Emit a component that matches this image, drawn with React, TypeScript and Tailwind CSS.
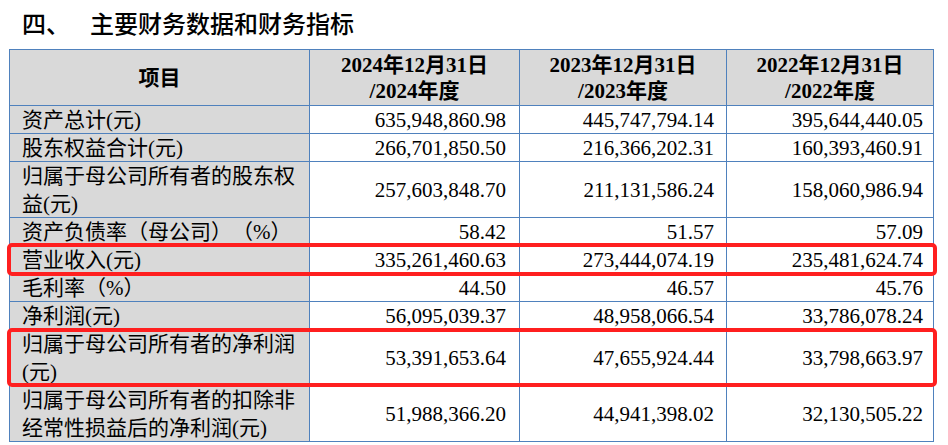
import React from "react";

type Row = { label: string[]; values: string[] };

const rows: Row[] = [
  { label: ["资产总计(元)"], values: ["635,948,860.98", "445,747,794.14", "395,644,440.05"] },
  { label: ["股东权益合计(元)"], values: ["266,701,850.50", "216,366,202.31", "160,393,460.91"] },
  { label: ["归属于母公司所有者的股东权", "益(元)"], values: ["257,603,848.70", "211,131,586.24", "158,060,986.94"] },
  { label: ["资产负债率（母公司）（%）"], values: ["58.42", "51.57", "57.09"] },
  { label: ["营业收入(元)"], values: ["335,261,460.63", "273,444,074.19", "235,481,624.74"] },
  { label: ["毛利率（%）"], values: ["44.50", "46.57", "45.76"] },
  { label: ["净利润(元)"], values: ["56,095,039.37", "48,958,066.54", "33,786,078.24"] },
  { label: ["归属于母公司所有者的净利润", "(元)"], values: ["53,391,653.64", "47,655,924.44", "33,798,663.97"] },
  { label: ["归属于母公司所有者的扣除非", "经常性损益后的净利润(元)"], values: ["51,988,366.20", "44,941,398.02", "32,130,505.22"] },
];

const headers = [
  ["2024年12月31日", "/2024年度"],
  ["2023年12月31日", "/2023年度"],
  ["2022年12月31日", "/2022年度"],
];

const widths = ["w-[210px]", "w-[207px]", "w-[207px]"];
const pads = ["pr-[13px]", "pr-[12px]", "pr-[10px]"];

export default function App() {
  return (
    <div
      className="relative w-[948px] h-[445px] overflow-hidden bg-white text-black [text-spacing-trim:space-all]"
      style={{ fontFamily: '"Liberation Serif", "Noto Sans CJK SC", serif' }}
    >
      <div
        className="h-[49px] pl-[22px] pt-[9px] text-[24px] leading-[28px] font-medium flex"
        style={{ fontFamily: '"Noto Sans CJK SC", sans-serif' }}
      >
        <span>四、</span>
        <span className="ml-[20px]">主要财务数据和财务指标</span>
      </div>

      <div className="ml-[9px] w-[925px] border-l border-t border-[#4f81bd]">
        {/* header */}
        <div className="flex h-[56px] bg-[#d9d9d9] font-bold text-[21px] leading-[26px]">
          <div className="w-[300px] border-r border-b border-[#4f81bd] flex items-center justify-center">
            项目
          </div>
          {headers.map((h, i) => (
            <div
              key={i}
              className={`${widths[i]} border-r border-b border-[#4f81bd] flex flex-col items-center justify-center`}
            >
              <div>{h[0]}</div>
              <div>{h[1]}</div>
            </div>
          ))}
        </div>

        {rows.map((r, ri) => {
          const tall = r.label.length > 1;
          return (
            <div key={ri} className={`flex ${tall ? "h-[56px]" : "h-[28px]"} text-[21px] leading-[28px]`}>
              <div className="w-[300px] bg-[#d9d9d9] border-r border-b border-[#4f81bd] pl-[12px] flex flex-col justify-center whitespace-nowrap">
                {r.label.map((l, li) => (
                  <div key={li}>{l}</div>
                ))}
              </div>
              {r.values.map((v, vi) => (
                <div
                  key={vi}
                  className={`${widths[vi]} ${pads[vi]} border-r border-b border-[#4f81bd] flex items-center justify-end`}
                >
                  {v}
                </div>
              ))}
            </div>
          );
        })}
      </div>

      <div className="absolute left-[7px] top-[243px] w-[930px] h-[33px] border-[4px] border-[#ff1f1f] rounded-[5px]" />
      <div className="absolute left-[7px] top-[328px] w-[930px] h-[59px] border-[4px] border-[#ff1f1f] rounded-[5px]" />
    </div>
  );
}
